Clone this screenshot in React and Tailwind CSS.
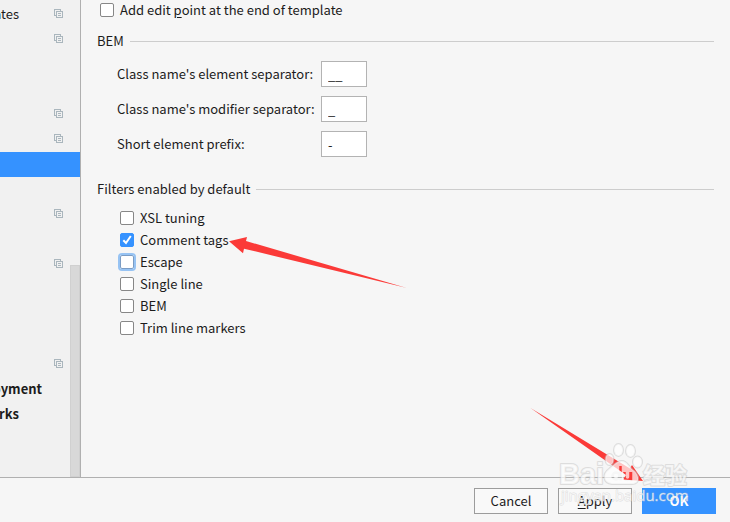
import { useState } from "react";

const treeRows = [
  { label: "ates", icon: true },
  { icon: true },
  {},
  {},
  { icon: true },
  { icon: true },
  { selected: true },
  {},
  { icon: true },
  {},
  { icon: true },
  {},
  {},
  {},
  { icon: true },
  { label: "oyment", bold: true },
  { label: "rks", bold: true },
  {},
  {},
];

const separators = [
  { id: "element", label: "Class name's element separator:", value: "__" },
  { id: "modifier", label: "Class name's modifier separator:", value: "_" },
  { id: "prefix", label: "Short element prefix:", value: "-" },
];

const filters = [
  "XSL tuning",
  "Comment tags",
  "Escape",
  "Single line",
  "BEM",
  "Trim line markers",
];

function CopyIcon() {
  return (
    <svg width="9" height="9" viewBox="0 0 9 9" fill="none" stroke="#aab6bd" shapeRendering="crispEdges">
      <path d="M2 6.5H.5V.5h6V2" />
      <path d="M2.5 2.5h6v6h-6zM4 4.5h3M4 6.5h3" />
    </svg>
  );
}

function Checkbox({ checked, focused, onChange, children }) {
  return (
    <label className="flex h-[22px] items-center gap-1.5">
      <span className="relative flex size-3.5">
        <input
          type="checkbox"
          checked={checked}
          onChange={onChange}
          className={`size-3.5 appearance-none rounded-[2px] border bg-white checked:border-[#3592ff] checked:bg-[#3592ff] ${
            focused
              ? "border-[#7b9cc4] outline-2 outline-[#97c3f3]"
              : "border-[#878787]"
          }`}
        />
        {checked && (
          <svg className="pointer-events-none absolute inset-0" width="14" height="14" viewBox="0 0 14 14" fill="none" stroke="#fff" strokeWidth="2">
            <path d="M3.3 7.2 6 10l4.8-7" />
          </svg>
        )}
      </span>
      <span>{children}</span>
    </label>
  );
}

function SectionTitle({ children }) {
  return (
    <h2 className="flex h-5 items-center gap-1.5">
      {children}
      <span className="h-px flex-1 bg-[#cdcdcd]" />
    </h2>
  );
}

function Sidebar() {
  return (
    <aside className="relative w-[81px] shrink-0 border-r border-[#b0b0b0] bg-[#f1f1f1] pt-0.5">
      <ul>
        {treeRows.map((row, i) => (
          <li
            key={i}
            className={`flex h-[25px] items-center pb-0.5 ${row.selected ? "bg-[#3592ff]" : ""}`}
          >
            <span
              className={`flex justify-end ${
                row.bold ? "font-bold" : ""
              } ${row.label === "oyment" ? "w-[42px]" : "w-[19px]"}`}
            >
              {row.label}
            </span>
            {row.icon && (
              <span className="ml-[35px]">
                <CopyIcon />
              </span>
            )}
          </li>
        ))}
      </ul>
      <div className="absolute right-0 bottom-0 h-[212px] w-2.5 border border-[#d0d0d0] bg-[#d8d8d8]" />
    </aside>
  );
}

function Watermark() {
  return (
    <svg
      className="pointer-events-none absolute right-0 bottom-0"
      width="210"
      height="122"
      viewBox="520 400 210 122"
    >
      <mask id="paw" maskUnits="userSpaceOnUse" x="590" y="440" width="60" height="50">
        <rect x="590" y="440" width="60" height="50" fill="#fff" />
        <g fill="none" stroke="#000" strokeWidth="2.5">
          <circle cx="616" cy="476" r="3.500" />
          <path d="M620.500 466v14.500M624.500 472v5c0 4 6 4 6 0v-5M631 472v9" />
        </g>
      </mask>
      <path d="M530.500 408 630 468.500l2-3.500 11 16-20-1.500 3-4.500z" fill="#fb3a38" />
      <g
        fill="#fff"
        fillOpacity=".7"
        stroke="#c4c4c4"
        strokeOpacity=".5"
        strokeWidth="2"
        strokeLinejoin="round"
        paintOrder="stroke"
      >
        <g mask="url(#paw)">
          <ellipse cx="609.500" cy="459.500" rx="4" ry="5.500" />
          <ellipse cx="618.500" cy="450" rx="4.500" ry="6" />
          <ellipse cx="630.500" cy="451" rx="4.500" ry="6" />
          <ellipse cx="637.500" cy="462" rx="4.500" ry="5.500" />
          <path d="M622 461c5 0 7 6 11 9 6 4 8 14-1 14H612c-9-1-10-10-3-15 4-3 7-8 13-8z" />
        </g>
        <text x="559" y="484" fontSize="29" fontWeight="700" fontFamily="'Liberation Sans', sans-serif">Bai</text>
        <text x="643" y="483" fontSize="22" fontWeight="700" fontFamily="'Noto Sans CJK SC', sans-serif">经验</text>
        <text x="561" y="501" fontSize="15" strokeWidth="1" fontFamily="'Open Sans', sans-serif">jingyan.baidu.com</text>
      </g>
    </svg>
  );
}

export default function App() {
  const [editPoint, setEditPoint] = useState(false);
  const [enabled, setEnabled] = useState(["Comment tags"]);

  const toggle = (name) => {
    setEnabled(
      enabled.includes(name)
        ? enabled.filter((n) => n !== name)
        : [...enabled, name]
    );
  };

  return (
    <div className="relative flex min-h-screen flex-col overflow-hidden bg-[#f6f6f6] font-['Noto_Sans_CJK_SC',sans-serif] text-[13px] leading-5 text-[#1c1c1c]">
      <div className="flex flex-1">
        <Sidebar />
        <main className="relative -mt-px flex-1 px-4">
          <div className="pl-[3px]">
            <Checkbox checked={editPoint} onChange={() => setEditPoint(!editPoint)}>
              Add edit <u className="underline-offset-2">p</u>oint at the end of template
            </Checkbox>
          </div>

          <section className="mt-2.5">
            <SectionTitle>BEM</SectionTitle>
            <div className="mt-2.5 flex flex-col gap-[9px] pl-5">
              {separators.map((s) => (
                <div key={s.id} className="flex items-center">
                  <label htmlFor={s.id} className="w-[204px]">
                    {s.label}
                  </label>
                  <input
                    id={s.id}
                    defaultValue={s.value}
                    className="h-[26px] w-[46px] border border-[#b3b3b3] bg-white px-1.5"
                  />
                </div>
              ))}
            </div>
          </section>

          <section className="mt-[22px]">
            <SectionTitle>Filters enabled by default</SectionTitle>
            <div className="mt-2 pl-[23px]">
              {filters.map((name) => (
                <Checkbox
                  key={name}
                  checked={enabled.includes(name)}
                  focused={name === "Escape"}
                  onChange={() => toggle(name)}
                >
                  {name}
                </Checkbox>
              ))}
            </div>
          </section>

          <svg
            className="pointer-events-none absolute top-[231px] left-[140px]"
            width="190"
            height="64"
            viewBox="221 230 190 64"
          >
            <path d="M229 241.300 247 237l-1 4 160 46.700-162-39-1 4.500z" fill="#fb3a38" />
          </svg>
        </main>
      </div>

      <footer className="flex justify-end gap-2.5 border-t border-[#b0b0b0] px-3.5 pt-2.5 pb-2">
        <button className="h-[26px] w-[74px] border border-[#9c9c9c] bg-[#f9f9f9]">
          Cancel
        </button>
        <button className="h-[26px] w-[74px] border border-[#9c9c9c] bg-[#f9f9f9]">
          <u className="underline-offset-2">A</u>pply
        </button>
        <button className="h-[26px] w-[74px] bg-[#3592ff] font-bold text-white">
          OK
        </button>
      </footer>

      <Watermark />
    </div>
  );
}
